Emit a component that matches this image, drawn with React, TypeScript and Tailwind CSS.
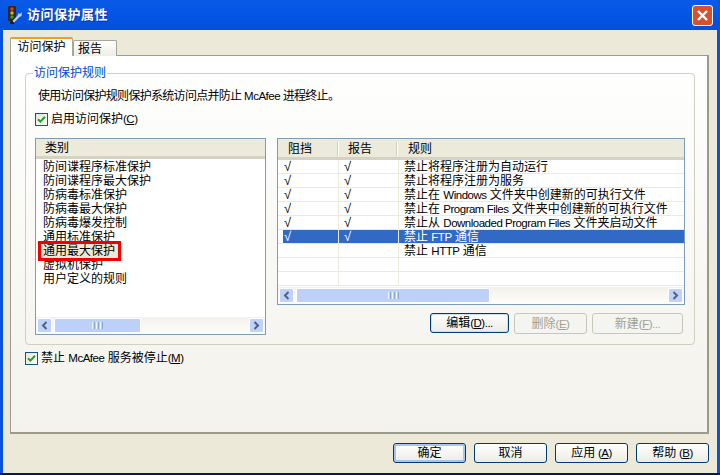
import type { ReactNode } from 'react'

const font = "font-['Tahoma','Liberation_Sans','Noto_Sans_CJK_SC',sans-serif]"

// latin runs sit narrower than the cjk glyphs around them
function L({ children }: { children: ReactNode }) {
  return <span className="text-[11.5px] tracking-[-0.5px]">{children}</span>
}

function Check() {
  return (
    <span className="flex h-[13px] w-[13px] shrink-0 items-center justify-center border border-[#1c5180] bg-gradient-to-br from-[#e6e6df] to-white">
      <svg width="9" height="9" viewBox="0 0 9 9">
        <path d="M1 4.2 L3.4 6.6 L8 1.8" fill="none" stroke="#21a121" strokeWidth="2" />
      </svg>
    </span>
  )
}

function XpButton({
  label,
  hotkey,
  tail,
  width,
  disabled,
  focused,
  deflt,
  spaced,
}: {
  label: string
  hotkey?: string
  tail?: string
  width: string
  disabled?: boolean
  focused?: boolean
  deflt?: boolean
  spaced?: boolean
}) {
  if (disabled) {
    return (
      <div className={`${width} flex h-[21px] items-center justify-center rounded-[3px] border border-[#c9c7ba] bg-[#f4f4f0] text-[12px] text-[#a1a192]`}>
        {label}
        <L>
          (<span className="underline">{hotkey}</span>){tail}
        </L>
      </div>
    )
  }
  return (
    <div
      className={`${width} flex h-[20px] items-center justify-center rounded-[3px] border border-[#003c74] bg-gradient-to-b from-white to-[#ecebe5] text-[12px] text-black ${
        deflt ? 'shadow-[inset_0_0_0_2px_#a9c4ee]' : focused ? 'shadow-[inset_0_0_0_1px_#cfdcf3]' : ''
      }`}
    >
      {label}
      {hotkey && (
        <L>
          {spaced ? '\u00a0' : ''}(<span className="underline">{hotkey}</span>){tail}
        </L>
      )}
    </div>
  )
}

function Arrow({ dir }: { dir: 'left' | 'right' }) {
  return (
    <span className="flex h-[15px] w-[15px] shrink-0 items-center justify-center rounded-[2px] border border-white bg-[#c1d2f8]">
      <svg width="7" height="9" viewBox="0 0 7 9">
        <path
          d={dir === 'left' ? 'M5.5 1 L2 4.5 L5.5 8' : 'M1.5 1 L5 4.5 L1.5 8'}
          fill="none"
          stroke="#4d6185"
          strokeWidth="2"
        />
      </svg>
    </span>
  )
}

function ScrollBar({ thumb }: { thumb: string }) {
  return (
    <div className="flex h-[17px] items-center bg-gradient-to-b from-[#f3f1ec] to-[#fdfdfa] px-px">
      <Arrow dir="left" />
      <div className="flex h-[15px] flex-1 pl-[2px] pr-[2px]">
        <div className={`${thumb} flex h-[15px] items-center justify-center gap-px rounded-[2px] border border-white bg-[#bdd0f8]`}>
          <span className="h-[7px] w-px bg-[#eef4fe]" />
          <span className="h-[7px] w-px bg-[#8ca6dc]" />
          <span className="h-[7px] w-px bg-[#eef4fe]" />
          <span className="h-[7px] w-px bg-[#8ca6dc]" />
          <span className="h-[7px] w-px bg-[#eef4fe]" />
          <span className="h-[7px] w-px bg-[#8ca6dc]" />
        </div>
      </div>
      <Arrow dir="right" />
    </div>
  )
}

const categories = [
  '防间谍程序标准保护',
  '防间谍程序最大保护',
  '防病毒标准保护',
  '防病毒最大保护',
  '防病毒爆发控制',
  '通用标准保护',
  '通用最大保护',
  '虚拟机保护',
  '用户定义的规则',
]

const rules: { on: boolean; text: ReactNode; selected?: boolean }[] = [
  { on: true, text: '禁止将程序注册为自动运行' },
  { on: true, text: '禁止将程序注册为服务' },
  { on: true, text: <>禁止在 <L>Windows</L> 文件夹中创建新的可执行文件</> },
  { on: true, text: <>禁止在 <L>Program Files</L> 文件夹中创建新的可执行文件</> },
  { on: true, text: <>禁止从 <L>Downloaded Program Files</L> 文件夹启动文件</> },
  { on: true, text: <>禁止 <L>FTP</L> 通信</>, selected: true },
  { on: false, text: <>禁止 <L>HTTP</L> 通信</> },
  { on: false, text: '' },
  { on: false, text: '' },
]

function HeaderCell({ label, width, pad }: { label: string; width: string; pad: string }) {
  return (
    <div className={`${width} ${pad} flex h-[18px] items-center`}>
      <span className="flex-1">{label}</span>
      <span className="h-[14px] w-[2px] border-x border-l-[#d0cfbd] border-r-white" />
    </div>
  )
}

function Tick() {
  return <span className="text-[13px] leading-[13px]">√</span>
}

export default function App() {
  return (
    <div className={`${font} flex h-[475px] w-[720px] flex-col overflow-hidden bg-[#0a53e0] text-[12px] leading-[14px] text-black`}>
      {/* title bar */}
      <div className="flex h-[30px] shrink-0 items-center rounded-t-[6px] bg-gradient-to-b from-[#0a5be6] via-[#0355e6] to-[#0450d8] pl-[5px] pr-[7px]">
        <svg width="18" height="20" viewBox="0 0 18 20" className="shrink-0">
          <rect x="3" y="1" width="8" height="15" rx="1" fill="#2b2b22" />
          <circle cx="7" cy="4" r="1.7" fill="#e23a2a" />
          <circle cx="7" cy="8" r="1.7" fill="#e0b520" />
          <circle cx="7" cy="12" r="1.7" fill="#4a9a38" />
          <rect x="5" y="16" width="4" height="3" fill="#1c1c14" />
          <path d="M17 7 L15 9 L13.5 8 L13 10 L7.5 16 L9 17.5 L14.5 12 L16.5 11 Z" fill="#c7ced4" />
        </svg>
        <span className="ml-[4px] flex-1 text-[13px] font-bold tracking-[0.5px] text-white [text-shadow:1px_1px_0_#0f2f8f]">访问保护属性</span>
        <span className="flex h-[21px] w-[21px] items-center justify-center rounded-[3px] border border-white bg-[#d9502f]">
          <svg width="13" height="13" viewBox="0 0 13 13">
            <path d="M2 2 L11 11 M11 2 L2 11" stroke="white" strokeWidth="2.4" />
          </svg>
        </span>
      </div>

      {/* dialog body */}
      <div className="mx-[3px] flex flex-1 flex-col bg-[#ece9d8] px-[7px] pt-[7px]">
        {/* tabs */}
        <div className="relative z-10 -mb-px flex h-[19px] shrink-0 items-end">
          <div className="flex h-[19px] w-[63px] items-center justify-center rounded-t-[2px] border-x border-[#a5a797] border-t-2 border-t-[#f0a020] bg-white pb-px">
            访问保护
          </div>
          <div className="flex h-[16px] w-[44px] items-center rounded-t-[2px] border-x border-t border-[#a5a797] bg-gradient-to-b from-white to-[#eeede5] pl-[4px]">
            报告
          </div>
        </div>

        {/* tab page */}
        <div className="flex h-[379px] w-[699px] shrink-0 flex-col border border-[#9a9a8d] border-b-[2px] border-r-[2px] bg-gradient-to-b from-white to-[#f3f2ec] pl-[14px] pr-[12px] pt-[17px]">
          {/* group box */}
          <div className="relative h-[272px] rounded-[4px] border border-[#d0d0bf] pl-[9px] pr-[11px] pt-[15px]">
            <span className="absolute left-[7px] top-[-8px] bg-[#fdfdfc] px-[1px] text-[#0046d5]">访问保护规则</span>
            <p className="pl-[3px] tracking-[-0.7px]">
              使用访问保护规则保护系统访问点并防止 <L>McAfee</L> 进程终止。
            </p>
            <label className="mt-[9px] flex h-[14px] items-center gap-[3px]">
              <Check />
              <span>
                启用访问保护
                <L>
                  (<span className="underline">C</span>)
                </L>
              </span>
            </label>
            <div className="mt-[12px] flex gap-[11px]">
              {/* categories */}
              <div className="flex h-[197px] w-[231px] shrink-0 flex-col border border-[#7f9db9] bg-white">
                <div className="flex h-[20px] shrink-0 items-center border-b-[3px] border-b-[#d6d2c2] bg-[#ebeadb] pl-[9px]">类别</div>
                <div className="flex flex-1 flex-col pt-px">
                  {categories.map((c) =>
                    c === '通用最大保护' ? (
                      <div key={c} className="relative z-10 my-[-3px] ml-[2px] h-[20px] w-[83px] border-[3px] border-[#f00000] bg-[#ece9d8] pl-[2px] leading-[14px]">
                        {c}
                      </div>
                    ) : (
                      <div key={c} className="h-[14px] pl-[7px]">
                        {c}
                      </div>
                    ),
                  )}
                </div>
                <ScrollBar thumb="w-[87px]" />
              </div>

              {/* rules */}
              <div className="flex w-[408px] shrink-0 flex-col">
                <div className="flex h-[167px] flex-col border border-[#7f9db9] bg-white">
                  <div className="flex h-[21px] shrink-0 items-center border-b-[3px] border-b-[#d6d2c2] bg-[#ebeadb] pt-px">
                    <HeaderCell label="阻挡" width="w-[61px]" pad="pl-[10px]" />
                    <HeaderCell label="报告" width="w-[59px]" pad="pl-[9px]" />
                    <div className="pl-[10px]">规则</div>
                  </div>
                  <div className="flex-1 overflow-hidden">
                    {rules.map((r, i) => (
                      <div key={i} className="flex h-[14px] border-b border-b-[#ecead8]">
                        <div className="w-[5px]" />
                        <div className={`flex flex-1 ${r.selected ? 'bg-[#316ac5] text-white' : ''}`}>
                          <div className="w-[56px] shrink-0 border-r border-r-[#ecead8] pl-px">{r.on ? <Tick /> : ''}</div>
                          <div className="w-[60px] shrink-0 border-r border-r-[#ecead8] pl-[5px]">{r.on ? <Tick /> : ''}</div>
                          <div className="pl-[5px] whitespace-nowrap">{r.text}</div>
                        </div>
                      </div>
                    ))}
                  </div>
                  <ScrollBar thumb="w-[194px]" />
                </div>
                <div className="mt-[8px] flex justify-end gap-[5px] pr-[2px]">
                  <XpButton label="编辑" hotkey="D" tail="..." width="w-[79px]" focused />
                  <XpButton label="删除" hotkey="E" width="w-[73px]" disabled />
                  <XpButton label="新建" hotkey="F" tail="..." width="w-[91px]" disabled />
                </div>
              </div>
            </div>
          </div>
          <label className="mt-[6px] flex h-[14px] items-center gap-[3px]">
            <Check />
            <span>
              禁止 <L>McAfee</L> 服务被停止
              <L>
                (<span className="underline">M</span>)
              </L>
            </span>
          </label>
        </div>

        {/* footer buttons */}
        <div className="mt-[9px] flex justify-end gap-[8px] pr-[1px]">
          <XpButton label="确定" width="w-[73px]" deflt />
          <XpButton label="取消" width="w-[73px]" />
          <XpButton label="应用" hotkey="A" width="w-[73px]" spaced />
          <XpButton label="帮助" hotkey="B" width="w-[73px]" spaced />
        </div>
      </div>
      <div className="h-[2px] shrink-0 bg-[#0a1a50]" />
    </div>
  )
}
